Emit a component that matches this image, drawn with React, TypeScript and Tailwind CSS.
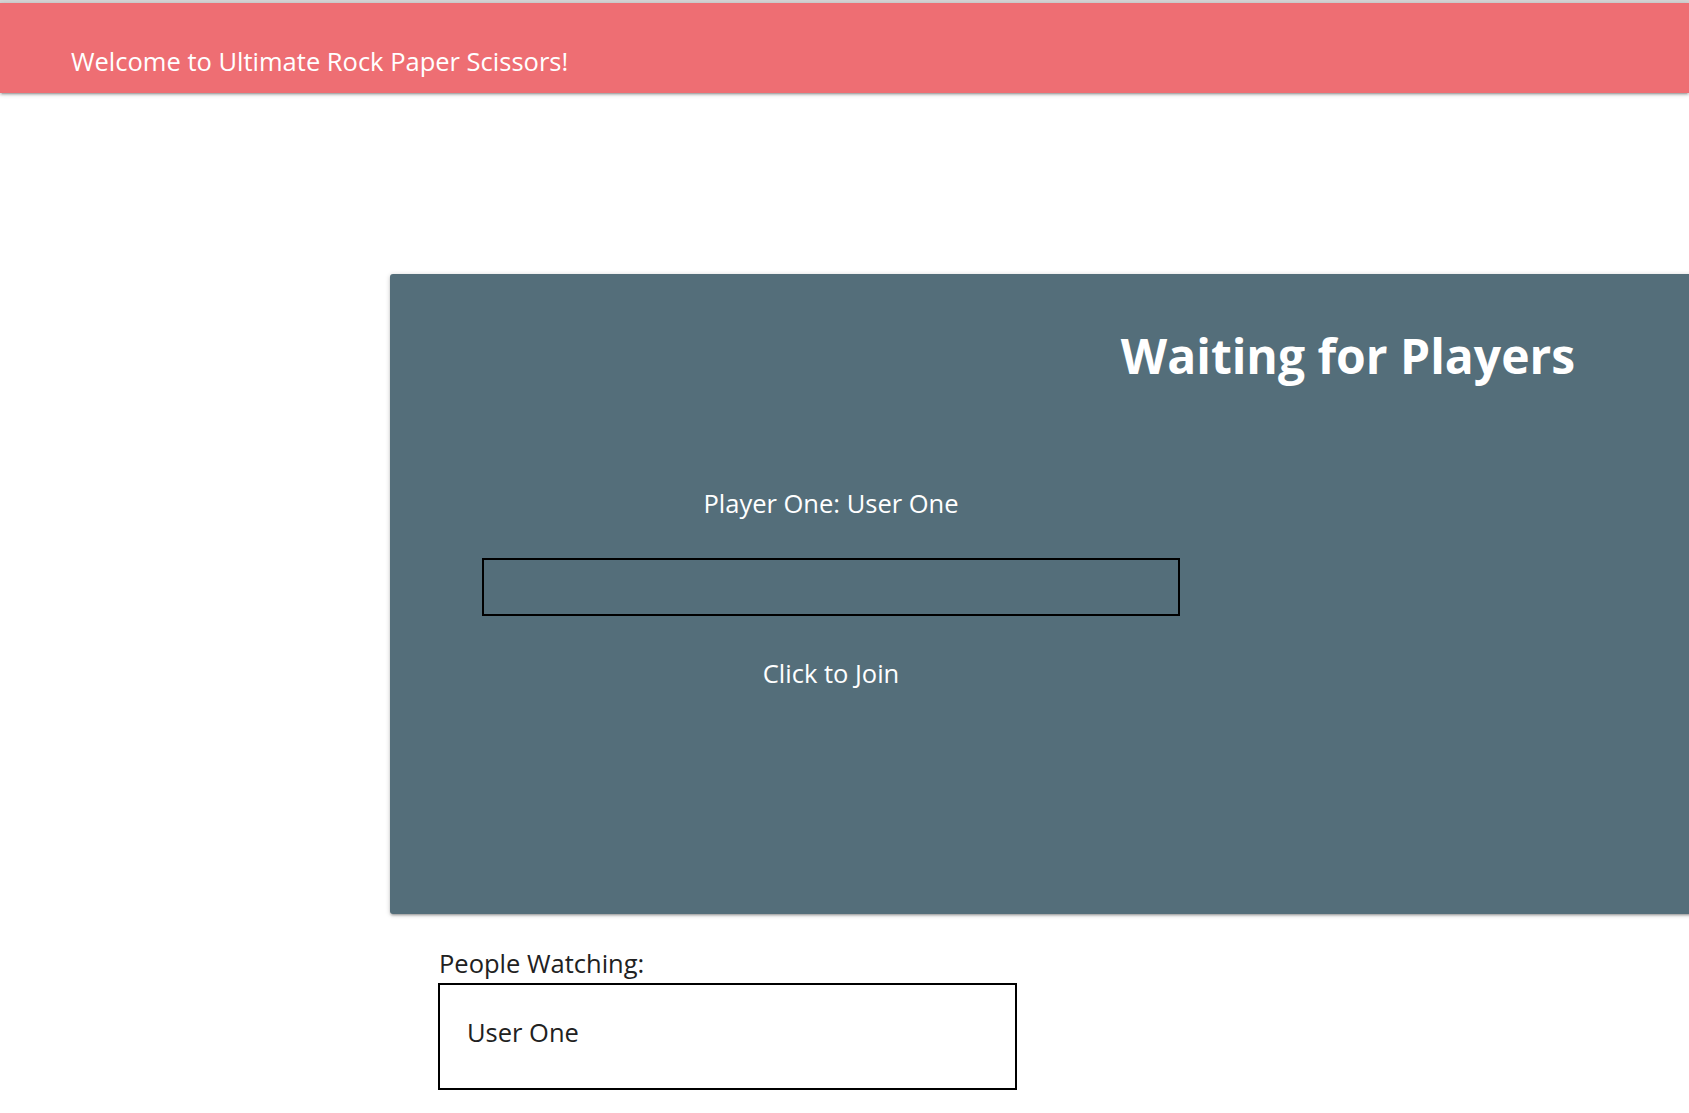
import React from "react";

export default function App() {
  const font = { fontFamily: '"Open Sans", "Noto Sans", sans-serif' };
  return (
    <div className="w-full min-h-[1113px] overflow-hidden bg-white" style={font}>
      <div className="h-[3px] bg-[#d6d6d6]" />
      <nav className="h-[90px] bg-[#ee6e73] pt-[40px] pl-[71px] shadow-[0_2px_2px_0_rgba(0,0,0,0.14),0_3px_1px_-2px_rgba(0,0,0,0.12),0_1px_5px_0_rgba(0,0,0,0.2)] relative">
        <div className="text-[25.5px] leading-[36px] text-white whitespace-nowrap">
          Welcome to Ultimate Rock Paper Scissors!
        </div>
      </nav>

      <div className="ml-[390px] mt-[181px] w-[1916px] h-[640px] bg-[#546e7a] rounded-[3px] pt-[52px] shadow-[0_2px_2px_0_rgba(0,0,0,0.14),0_3px_1px_-2px_rgba(0,0,0,0.12),0_1px_5px_0_rgba(0,0,0,0.2)]">
        <h1 className="text-center text-[48px] leading-[60px] font-bold text-white whitespace-nowrap">
          Waiting for Players
        </h1>
        <div className="w-[882px] flex flex-col items-center mt-[99px]">
          <div className="text-[25.5px] leading-[36px] text-white whitespace-nowrap">
            Player One: User One
          </div>
          <input
            type="text"
            className="mt-[37px] w-[698px] h-[58px] border-2 border-black bg-transparent outline-none"
          />
          <button className="mt-[39px] text-[25.5px] leading-[36px] text-white whitespace-nowrap bg-transparent">
            Click to Join
          </button>
        </div>
      </div>

      <div className="ml-[439px] mt-[31px]">
        <div className="text-[25.5px] leading-[36px] text-[#212121] whitespace-nowrap">
          People Watching:
        </div>
        <div className="-ml-px mt-[2px] w-[579px] h-[107px] border-2 border-black pt-[29px] pl-[27px]">
          <div className="text-[25.5px] leading-[36px] text-[#212121] whitespace-nowrap">User One</div>
        </div>
      </div>
    </div>
  );
}
